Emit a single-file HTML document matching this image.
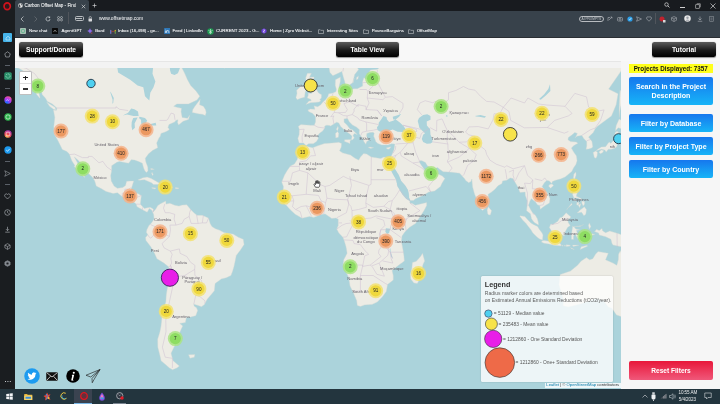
<!DOCTYPE html>
<html><head><meta charset="utf-8">
<style>
*{box-sizing:border-box}
html,body{margin:0;padding:0;width:720px;height:404px;overflow:hidden;background:#1a1d20;font-family:"Liberation Sans",sans-serif}
.a{position:absolute}
#side{left:0;top:0;width:15px;height:388.5px;background:#1a1d20}
#tabbar{left:15px;top:0;width:705px;height:11px;background:#181b1f}
#tab{left:15px;top:0;width:74px;height:11px;background:#38424b;border-radius:2px 2px 0 0}
#toolbar{left:15px;top:11px;width:705px;height:27px;background:#38424b}
.ct{color:#eef0f2;font-size:4.4px;white-space:nowrap;line-height:1;text-shadow:0 0 0.4px rgba(255,255,255,0.6)}
#page{left:15px;top:38px;width:705px;height:350.5px;background:#f6f6f6}
#header{left:15px;top:38px;width:705px;height:23px;background:#f8f8f8}
#band{left:15px;top:60.7px;width:606px;height:7.3px;background:#f3f3f3;border-top:0.8px solid #e6e6e6}
.btn{height:15px;top:42px;border-radius:2.5px;background:linear-gradient(#5c5c5c,#1a1a1a 55%,#000);color:#fff;font-weight:bold;font-size:6.7px;text-align:center;line-height:15px;box-shadow:0 0.5px 1px rgba(0,0,0,.4)}
#map{left:15px;top:68px;width:606px;height:320.5px;overflow:hidden}
.bb{left:629px;width:84px;border-radius:2px;background:linear-gradient(#1677ee,#17b4f7);color:#fff;font-weight:bold;font-size:7.05px;text-align:center}
#taskbar{left:0;top:388.5px;width:720px;height:15.5px;background:#23353e}
html{filter:grayscale(0)}
</style></head><body>
<div class="a" id="side"></div>
<div class="a" id="tabbar"></div>
<div class="a" id="tab"></div>
<div class="a" id="toolbar"></div>


<!-- sidebar icons -->
<svg class="a" style="left:3.2px;top:2.2px" width="8.4" height="8.4" viewBox="0 0 16 16"><ellipse cx="8" cy="8" rx="6" ry="6.4" fill="none" stroke="#d0121c" stroke-width="3.2"/><ellipse cx="8" cy="8" rx="1.9" ry="3.6" fill="none" stroke="#7a0a10" stroke-width="0.8"/></svg>
<div class="a" style="left:3px;top:33px;width:9px;height:9px;background:#46b4ea;border-radius:1px"></div>
<svg class="a" style="left:4.5px;top:34.5px" width="6" height="6" viewBox="0 0 12 12"><path d="M2 6L6 2.5L10 6V10H2Z" fill="none" stroke="#e8f6fd" stroke-width="1.1"/></svg>
<svg class="a" style="left:4px;top:50.5px" width="7" height="7" viewBox="0 0 14 14"><path d="M7 1.5L12.5 5.5L10.5 12H3.5L1.5 5.5Z" fill="none" stroke="#b9bdc2" stroke-width="1.2"/></svg>
<div class="a" style="left:5px;top:65px;width:5px;height:0.8px;background:#5a6068"></div>
<svg class="a" style="left:3.5px;top:72px" width="8" height="8" viewBox="0 0 16 16"><rect x="0.5" y="0.5" width="15" height="15" rx="3" fill="#2a8f6a"/><circle cx="8" cy="8" r="4.2" fill="none" stroke="#9fe0c2" stroke-width="1.5" stroke-dasharray="3 1.5"/></svg>
<div class="a" style="left:5px;top:88.3px;width:5px;height:0.8px;background:#5a6068"></div>
<svg class="a" style="left:3.5px;top:95.7px" width="8" height="8" viewBox="0 0 16 16"><defs><radialGradient id="mg" cx="0.3" cy="0.9" r="1"><stop offset="0" stop-color="#0a7cff"/><stop offset="0.5" stop-color="#a033ff"/><stop offset="1" stop-color="#ff5c87"/></radialGradient></defs><circle cx="8" cy="8" r="7.3" fill="url(#mg)"/><path d="M3.5 10L6.5 6.5L8.5 8.3L12 6L9 9.6L7 7.8Z" fill="#fff"/></svg>
<svg class="a" style="left:3.5px;top:113px" width="8" height="8" viewBox="0 0 16 16"><circle cx="8" cy="8" r="7.3" fill="#2bb34a"/><circle cx="8" cy="8" r="4.3" fill="none" stroke="#e5f7e8" stroke-width="1.3"/></svg>
<svg class="a" style="left:3.5px;top:129.6px" width="8" height="8" viewBox="0 0 16 16"><defs><radialGradient id="ig" cx="0.3" cy="1" r="1.1"><stop offset="0" stop-color="#fdd35b"/><stop offset="0.45" stop-color="#f04f4f"/><stop offset="1" stop-color="#a435c8"/></radialGradient></defs><circle cx="8" cy="8" r="7.3" fill="url(#ig)"/><rect x="4.5" y="4.5" width="7" height="7" rx="2" fill="none" stroke="#fff" stroke-width="1.1"/></svg>
<svg class="a" style="left:3.5px;top:146.3px" width="8" height="8" viewBox="0 0 16 16"><circle cx="8" cy="8" r="7.3" fill="#1d9bf0"/><path d="M4.6 8.3L7 10.5L11.4 5.8" fill="none" stroke="#fff" stroke-width="1.5"/></svg>
<div class="a" style="left:5px;top:161.2px;width:5px;height:0.8px;background:#5a6068"></div>
<svg class="a" style="left:4px;top:169.7px" width="7" height="7" viewBox="0 0 14 14"><path d="M1.5 1.5L12.5 7L1.5 12.5L4 7Z" fill="none" stroke="#a9aeb4" stroke-width="1.1" stroke-linejoin="round"/></svg>
<div class="a" style="left:5px;top:184px;width:5px;height:0.8px;background:#5a6068"></div>
<svg class="a" style="left:4px;top:192.5px" width="7" height="7" viewBox="0 0 14 14"><path d="M7 12L2 7A2.9 2.9 0 0 1 7 3A2.9 2.9 0 0 1 12 7Z" fill="none" stroke="#b9bdc2" stroke-width="1.2"/></svg>
<svg class="a" style="left:4px;top:209.2px" width="7" height="7" viewBox="0 0 14 14"><circle cx="7" cy="7" r="5.6" fill="none" stroke="#b9bdc2" stroke-width="1.2"/><path d="M7 3.8V7L9.3 9" fill="none" stroke="#b9bdc2" stroke-width="1.1"/></svg>
<svg class="a" style="left:4px;top:226px" width="7" height="7" viewBox="0 0 14 14"><path d="M7 1.5V9M4 6.3L7 9.3L10 6.3M2.5 12.3H11.5" fill="none" stroke="#b9bdc2" stroke-width="1.2"/></svg>
<svg class="a" style="left:4px;top:242.5px" width="7" height="7" viewBox="0 0 14 14"><path d="M7 1.3L12.2 4.2V9.8L7 12.7L1.8 9.8V4.2Z M1.8 4.2L7 7.1L12.2 4.2M7 7.1V12.7" fill="none" stroke="#b9bdc2" stroke-width="1.1"/></svg>
<svg class="a" style="left:4px;top:259.8px" width="7" height="7" viewBox="0 0 14 14"><path d="M7 1.3L12.2 4.2V9.8L7 12.7L1.8 9.8V4.2Z" fill="#7c8087" stroke="#a9aeb4" stroke-width="1"/><circle cx="7" cy="7" r="2.2" fill="#1b1d21"/></svg>
<div class="a" style="left:4.5px;top:380.5px;width:1px;height:1px;background:#c8ccd0;box-shadow:2.4px 0 #c8ccd0,4.8px 0 #c8ccd0"></div>

<!-- tab -->
<svg class="a" style="left:17.5px;top:3.3px" width="5" height="5" viewBox="0 0 10 10"><circle cx="5" cy="5" r="4.6" fill="#e8e8e8"/><path d="M2.2 3.2 Q4 2 4.6 4 Q3.6 5.6 5 6.6 Q4.4 8.6 3.6 9 Q1.5 7.5 1.2 5.2Z M6 1 Q8.8 2.5 9.2 5 Q8 5.6 7.2 4.6 Q6.2 3.2 6 1Z" fill="#3a3f46"/></svg>
<div class="a ct" style="left:24.6px;top:4.1px;font-size:4.6px;color:#e6e8ea">Carbon Offset Map - Find</div>
<div class="a" style="left:74px;top:1px;width:5px;height:10px;background:linear-gradient(90deg,rgba(56,66,75,0),#38424b)"></div>
<svg class="a" style="left:80.5px;top:3.5px" width="5" height="5" viewBox="0 0 10 10"><path d="M1.5 1.5L8.5 8.5M8.5 1.5L1.5 8.5" stroke="#d8dadc" stroke-width="1.3"/></svg>
<svg class="a" style="left:91.5px;top:3px" width="5" height="5" viewBox="0 0 10 10"><path d="M5 1V9M1 5H9" stroke="#d8dadc" stroke-width="1.3"/></svg>
<!-- window controls -->
<svg class="a" style="left:664px;top:2.2px" width="6" height="6" viewBox="0 0 12 12"><circle cx="5" cy="5" r="3.5" fill="none" stroke="#dcdcdc" stroke-width="1.4"/><path d="M7.5 7.5L11 11" stroke="#dcdcdc" stroke-width="1.6"/></svg>
<div class="a" style="left:679.5px;top:7px;width:5px;height:0.8px;background:#d0d0d0"></div>
<svg class="a" style="left:695px;top:2.5px" width="6" height="6" viewBox="0 0 12 12"><rect x="1.5" y="3.5" width="7" height="7" fill="none" stroke="#d0d0d0" stroke-width="1.2"/><path d="M3.5 1.5H10.5V8.5" fill="none" stroke="#d0d0d0" stroke-width="1.2"/></svg>
<svg class="a" style="left:709.5px;top:2.5px" width="6" height="6" viewBox="0 0 12 12"><path d="M1 1L11 11M11 1L1 11" stroke="#e0e0e0" stroke-width="1.3"/></svg>
<!-- address row -->
<svg class="a" style="left:20px;top:15.5px" width="5" height="6" viewBox="0 0 10 12"><path d="M7 1L2 6L7 11" fill="none" stroke="#cfd2d5" stroke-width="1.4"/></svg>
<svg class="a" style="left:33px;top:15.5px" width="5" height="6" viewBox="0 0 10 12"><path d="M3 1L8 6L3 11" fill="none" stroke="#6c7178" stroke-width="1.4"/></svg>
<svg class="a" style="left:44.5px;top:15.7px" width="6" height="6" viewBox="0 0 12 12"><path d="M10 6A4 4 0 1 1 8.5 2.8" fill="none" stroke="#cfd2d5" stroke-width="1.4"/><path d="M7 0.8L10.6 1.6L9.6 5Z" fill="#cfd2d5"/></svg>
<svg class="a" style="left:57px;top:16px" width="6" height="5.5" viewBox="0 0 12 11"><circle cx="3" cy="3" r="2" fill="none" stroke="#cfd2d5" stroke-width="1.1"/><circle cx="9" cy="3" r="2" fill="none" stroke="#cfd2d5" stroke-width="1.1"/><circle cx="3" cy="8" r="2" fill="none" stroke="#cfd2d5" stroke-width="1.1"/><circle cx="9" cy="8" r="2" fill="none" stroke="#cfd2d5" stroke-width="1.1"/></svg>
<div class="a" style="left:68px;top:12px;width:0.7px;height:12px;background:#50555c"></div>
<div class="a" style="left:74.6px;top:15.6px;width:9.4px;height:5.9px;border:0.8px solid #b8bcc0;border-radius:1.5px"></div>
<div class="a" style="left:76.3px;top:18.2px;width:6px;height:0.8px;background:#b8bcc0"></div>
<svg class="a" style="left:87.5px;top:15.5px" width="4.5" height="6" viewBox="0 0 9 12"><path d="M2.2 5V3.4A2.3 2.3 0 0 1 6.8 3.4V5" fill="none" stroke="#d8dadd" stroke-width="1.2"/><rect x="1" y="5" width="7" height="6" rx="0.8" fill="#d8dadd"/></svg>
<div class="a ct" style="left:99px;top:17.3px;font-size:4.95px;color:#cdd0d4">www.offsetmap.com</div>
<!-- right icons -->
<div class="a" style="left:578.7px;top:15.6px;width:25.3px;height:6.3px;border:0.8px solid #b8bcc0;border-radius:3.2px;color:#c8ccd0;font-size:3.2px;line-height:4.9px;text-align:center">AI PROMPTS</div>
<svg class="a" style="left:607px;top:16px" width="6" height="6" viewBox="0 0 12 12"><path d="M2 10V3H6M4 8L10 2M7 2H10V5" fill="none" stroke="#b8bcc0" stroke-width="1.1"/></svg>
<svg class="a" style="left:616.5px;top:16px" width="6" height="6" viewBox="0 0 12 12"><rect x="1" y="3" width="10" height="7" rx="1.5" fill="none" stroke="#b8bcc0" stroke-width="1.1"/><circle cx="6" cy="6.5" r="2" fill="none" stroke="#b8bcc0" stroke-width="1.1"/></svg>
<svg class="a" style="left:626.5px;top:15.6px" width="6" height="6" viewBox="0 0 12 12"><circle cx="6" cy="6" r="5.2" fill="#2b9ee8"/><path d="M3.5 6.3L5.4 8L8.6 4" fill="none" stroke="#fff" stroke-width="1.3"/></svg>
<svg class="a" style="left:636px;top:16px" width="6" height="6" viewBox="0 0 12 12"><path d="M1 1.5L11 6L1 10.5L3 6Z" fill="none" stroke="#b8bcc0" stroke-width="1.1"/></svg>
<svg class="a" style="left:645.5px;top:16px" width="6" height="6" viewBox="0 0 12 12"><path d="M6 10.5L1.6 6A2.6 2.6 0 0 1 6 2.6A2.6 2.6 0 0 1 10.4 6Z" fill="none" stroke="#b8bcc0" stroke-width="1.1"/></svg>
<div class="a" style="left:655px;top:13px;width:0.7px;height:11px;background:#50555c"></div>
<svg class="a" style="left:658.5px;top:15.5px" width="7" height="7" viewBox="0 0 14 14"><circle cx="6" cy="6" r="5" fill="#c0232e"/><rect x="8" y="8" width="5" height="5" fill="#d8d8d8"/></svg>
<svg class="a" style="left:671px;top:16px" width="6" height="6" viewBox="0 0 12 12"><path d="M6 1L11 3.5V8.5L6 11L1 8.5V3.5Z M1 3.5L6 6L11 3.5M6 6V11" fill="none" stroke="#b8bcc0" stroke-width="1"/></svg>
<svg class="a" style="left:684px;top:15px" width="7" height="7" viewBox="0 0 14 14"><circle cx="7" cy="7" r="6.5" fill="#e8e8e8"/><circle cx="7" cy="5.5" r="2.4" fill="#9aa0a8"/><path d="M2.8 11.5Q7 6.5 11.2 11.5" fill="#9aa0a8"/></svg>
<svg class="a" style="left:697px;top:16px" width="6" height="6" viewBox="0 0 12 12"><path d="M6 1V8M3 5L6 8L9 5M1.5 10.5H10.5" fill="none" stroke="#b8bcc0" stroke-width="1.1"/></svg>
<svg class="a" style="left:709px;top:15.8px" width="5" height="6" viewBox="0 0 10 12"><rect x="1.5" y="1" width="7" height="10" fill="none" stroke="#9aa0a6" stroke-width="1"/><path d="M3 4H7M3 6H7M3 8H7" stroke="#9aa0a6" stroke-width="0.8"/></svg>
<!-- bookmarks -->
<svg class="a" style="left:20.3px;top:28px" width="6" height="6" viewBox="0 0 12 12"><rect x="0" y="0" width="12" height="12" rx="1.5" fill="#a9bfb4"/><circle cx="6" cy="6" r="3.6" fill="none" stroke="#3fae7a" stroke-width="1.2"/></svg>
<div class="a ct" style="left:29px;top:29.2px">New chat</div>
<svg class="a" style="left:52px;top:28px" width="6" height="6" viewBox="0 0 12 12"><rect width="12" height="12" rx="1" fill="#0a0a0a"/><path d="M3 8L6 4L9 8" fill="none" stroke="#ddd" stroke-width="1"/></svg>
<div class="a ct" style="left:61.5px;top:29.2px">AgentGPT</div>
<svg class="a" style="left:86.5px;top:28px" width="6" height="6" viewBox="0 0 12 12"><path d="M6 0.5Q6.8 5.2 11.5 6Q6.8 6.8 6 11.5Q5.2 6.8 0.5 6Q5.2 5.2 6 0.5Z" fill="#8d6be8"/><circle cx="9.5" cy="10" r="1.2" fill="#e5484d"/></svg>
<div class="a ct" style="left:95.2px;top:29.2px">Bard</div>
<svg class="a" style="left:109.5px;top:28.5px" width="6" height="5" viewBox="0 0 12 10"><path d="M0.5 1.5V9.5H2.5V4L6 6.5L9.5 4V9.5H11.5V1.5L6 5.5Z" fill="#e24236"/><path d="M0.5 1.5L2.5 3V9.5H0.5Z" fill="#4285f4"/><path d="M11.5 1.5L9.5 3V9.5H11.5Z" fill="#34a853"/><path d="M9.5 3L11.5 1.5V3.5L9.5 5Z" fill="#fbbc04"/></svg>
<div class="a ct" style="left:118px;top:29.2px">Inbox (16,498) - ge...</div>
<svg class="a" style="left:163.7px;top:28px" width="6.3" height="6" viewBox="0 0 12 12"><rect width="12" height="12" rx="1" fill="#2f78b8"/><path d="M2.5 5V10M2.5 2.8V3.4M5 10V5M5 7Q5 5 7.2 5Q9.5 5 9.5 7.5V10" stroke="#fff" stroke-width="1.3" fill="none"/></svg>
<div class="a ct" style="left:172.5px;top:29.2px">Feed | LinkedIn</div>
<svg class="a" style="left:206.5px;top:28px" width="7" height="7" viewBox="0 0 14 14"><circle cx="7" cy="7" r="6.5" fill="#1f9a52"/><path d="M7 2V12M3 5L7 7L11 5M4 10L7 8L10 10" stroke="#e8f4ea" stroke-width="1.2" fill="none"/></svg>
<div class="a ct" style="left:216px;top:29.2px">CURRENT 2023 - G...</div>
<svg class="a" style="left:261px;top:28px" width="6" height="6" viewBox="0 0 12 12"><path d="M6 0.5L11 3.3V8.7L6 11.5L1 8.7V3.3Z" fill="#6b3fd8"/><path d="M4 4H8L4 8H8" stroke="#fff" stroke-width="1" fill="none"/></svg>
<div class="a ct" style="left:270px;top:29.2px">Home | Zyro Websit...</div>
<svg class="a" style="left:317.5px;top:28.8px" width="6" height="5" viewBox="0 0 12 10"><path d="M1 1.5H4.5L5.5 2.7H11V9H1Z" fill="none" stroke="#c8ccd0" stroke-width="1.1"/></svg>
<div class="a ct" style="left:326.7px;top:29.2px">Interesting Sites</div>
<svg class="a" style="left:363px;top:28.8px" width="6" height="5" viewBox="0 0 12 10"><path d="M1 1.5H4.5L5.5 2.7H11V9H1Z" fill="none" stroke="#c8ccd0" stroke-width="1.1"/></svg>
<div class="a ct" style="left:371.7px;top:29.2px">PounceBargains</div>
<svg class="a" style="left:408px;top:28.8px" width="6" height="5" viewBox="0 0 12 10"><path d="M1 1.5H4.5L5.5 2.7H11V9H1Z" fill="none" stroke="#c8ccd0" stroke-width="1.1"/></svg>
<div class="a ct" style="left:416.7px;top:29.2px">OffsetMap</div>
<div class="a" style="left:15px;top:37px;width:705px;height:1px;background:#2a2e33"></div>

<div class="a" id="page"></div>
<div class="a" id="header"></div>
<div class="a" id="band"></div>

<!-- header buttons -->
<div class="a btn" style="left:19px;width:64px">Support/Donate</div>
<div class="a btn" style="left:336px;width:63px">Table View</div>
<div class="a btn" style="left:652px;width:64px">Tutorial</div>

<!-- right panel -->
<div class="a" style="left:628.5px;top:63.5px;width:84.5px;height:9.5px;background:#ffff1a;color:#111;font-weight:bold;font-size:6.3px;line-height:9.5px;text-align:center">Projects Displayed: 7357</div>
<div class="a bb" style="top:77px;height:27.5px;line-height:9.8px;padding-top:4.5px">Search in the Project<br>Description</div>
<div class="a bb" style="top:114px;height:17.5px;line-height:19.2px">Filter by Database</div>
<div class="a bb" style="top:137px;height:17.5px;line-height:19.2px">Filter by Project Type</div>
<div class="a bb" style="top:160.3px;height:17.5px;line-height:19.2px">Filter by Country</div>
<div class="a" style="left:629px;top:361px;width:84px;height:19px;border-radius:2px;background:linear-gradient(#e8173a,#f0587a);color:#fff;font-weight:bold;font-size:6.6px;line-height:19px;text-align:center">Reset Filters</div>

<div class="a" id="map">
<svg width="606" height="321" viewBox="15 68 606 321" style="position:absolute;left:0;top:0;font-family:'Liberation Sans',sans-serif">
<rect x="15" y="68" width="606" height="321" fill="#abd3db"/>
<path d="M358.5 75.9L358.1 78.5L356.6 80.0L356.4 77.7ZM354.3 78.3L353.2 82.7L352.6 82.7L353.9 79.3ZM-42.8 3.5L190.7 3.5L181.1 63.2L181.1 66.2L184.9 73.7L187.5 79.7L190.7 85.4L196.0 90.9L199.8 96.2L197.0 100.0L188.5 104.0L176.9 104.0L173.7 106.3L176.9 107.3L181.5 108.3L181.1 111.8L182.2 117.4L187.5 118.3L189.8 114.9L188.5 119.5L183.2 121.3L178.6 124.9L177.5 122.5L177.9 119.8L175.8 120.4L174.8 121.9L169.0 124.6L168.0 127.5L169.4 129.2L168.2 130.6L165.2 132.0L161.0 133.4L160.3 136.2L159.0 137.9L156.9 142.4L156.7 143.2L157.8 147.7L152.9 150.3L148.6 153.8L145.3 158.3L145.9 162.0L147.8 166.9L148.0 170.9L146.3 172.5L144.8 170.7L143.6 168.1L142.3 163.2L138.0 161.3L134.4 160.1L131.2 159.8L128.7 163.2L125.9 162.8L119.6 161.5L116.8 162.3L111.7 165.7L111.7 170.4L110.7 175.6L111.3 180.9L114.1 186.1L117.4 188.3L122.8 187.4L125.5 185.4L126.6 181.3L130.2 180.9L133.8 180.9L131.7 187.6L130.8 189.9L130.0 193.9L131.9 193.6L137.8 193.4L141.4 195.4L140.6 201.9L140.4 204.3L144.4 208.4L147.2 207.8L150.3 207.3L153.7 209.3L152.7 212.3L151.6 209.9L149.3 208.6L147.2 212.3L142.9 209.9L137.0 206.7L136.1 204.1L132.3 200.9L131.2 199.3L122.1 196.5L117.4 192.8L113.2 193.6L106.0 191.4L101.5 188.8L96.2 186.1L94.7 180.9L92.2 177.0L86.3 171.6L82.9 166.1L78.6 160.8L74.4 157.1L77.1 162.0L80.3 168.1L83.5 173.9L84.8 177.7L79.9 172.8L73.9 166.1L75.0 165.7L71.8 160.8L69.3 154.1L66.9 151.6L62.3 149.5L58.0 140.8L54.0 133.7L53.8 126.3L54.8 117.4L53.4 109.9L56.5 110.2L56.8 108.0L52.3 104.0L47.4 101.4L45.3 98.0L42.1 94.5L41.3 89.8L40.0 88.4L35.7 87.3L32.6 82.7L29.4 78.5L27.3 74.9L23.0 70.8L18.8 68.3L13.5 67.0L8.2 66.2L-0.3 69.6L-10.9 79.7L-42.8 3.5ZM35.5 90.2L38.5 90.9L40.0 97.3L39.8 98.3L36.6 94.5ZM192.2 112.4L192.8 109.6L194.9 106.3L200.2 99.3L199.6 104.7L203.4 106.3L205.5 109.6L206.2 112.4L205.3 115.6L202.3 114.3L199.4 114.0ZM55.9 110.2L55.1 107.3L46.6 102.0L49.5 106.3L53.4 109.3ZM137.8 179.9L142.9 177.7L147.2 177.0L151.4 178.6L155.7 180.9L160.5 183.8L157.8 184.5L153.5 184.5L151.4 182.7L147.2 180.9L144.4 179.7L139.7 180.2ZM163.5 184.9L166.3 184.5L169.7 184.9L172.8 187.6L168.4 188.3L164.1 188.1L160.1 188.5L163.5 187.2ZM151.8 187.6L156.1 187.9L155.0 189.0L151.8 188.3ZM175.4 187.6L178.8 187.9L178.4 188.8L175.4 188.8ZM165.8 201.1L160.5 203.7L157.8 205.4L156.1 208.4L154.6 210.6L152.7 212.3L153.7 214.8L154.0 219.3L150.8 223.8L148.9 225.5L146.9 229.5L146.3 232.3L147.8 234.8L145.5 237.6L145.9 240.4L150.8 246.8L154.4 253.3L156.9 258.7L163.9 263.1L168.8 267.1L168.4 278.9L167.5 287.1L166.3 294.4L165.8 301.9L162.4 312.2L161.6 320.4L161.0 326.0L159.9 331.8L157.6 339.3L157.8 347.2L159.9 355.5L161.0 360.7L165.2 364.3L169.4 367.9L172.6 369.8L176.9 367.9L179.4 366.1L173.1 360.7L172.4 358.3L171.1 353.2L174.8 345.6L175.0 340.9L174.5 337.8L178.8 334.8L181.3 328.9L182.8 326.0L179.8 323.4L185.4 322.6L186.4 317.6L190.7 317.1L195.8 315.7L197.7 310.4L196.6 307.8L194.1 305.9L193.8 304.2L198.7 305.7L201.5 306.7L204.5 304.4L207.2 299.3L211.3 294.4L214.4 290.7L215.1 283.6L221.4 278.9L226.3 277.8L231.0 275.5L232.7 270.9L234.0 266.4L235.2 260.9L236.3 255.4L240.5 250.0L244.1 244.6L243.3 239.3L238.4 237.2L233.1 234.0L228.9 233.5L224.0 232.5L219.3 230.1L215.5 228.7L211.9 226.5L210.2 223.4L208.5 218.0L202.3 215.3L197.0 215.3L194.3 213.1L190.7 209.5L186.8 204.8L182.2 205.0L179.0 206.1L174.8 205.2L169.9 203.2L166.0 204.1ZM188.5 354.8L194.9 354.5L194.3 357.2L190.0 358.3ZM305.5 146.1L312.7 147.7L316.9 146.1L324.4 143.5L331.8 143.0L338.8 142.2L341.6 143.5L341.3 146.9L339.6 150.8L342.4 152.8L346.0 153.8L350.5 154.9L355.1 158.3L358.7 160.1L360.4 157.1L363.6 153.6L366.8 154.1L371.3 156.9L376.4 157.8L380.6 158.6L383.8 157.1L386.5 157.8L390.6 157.6L392.1 162.0L391.0 165.7L390.2 168.1L393.6 175.1L396.3 179.7L397.6 186.5L400.8 191.0L402.3 194.3L406.1 198.7L409.9 200.9L409.9 203.0L412.4 203.5L415.2 205.2L426.7 202.4L426.7 205.4L424.1 210.6L419.9 217.0L415.6 223.4L409.3 227.6L405.0 231.8L402.0 236.1L401.4 241.4L402.9 248.9L403.9 255.4L404.4 260.9L398.6 265.3L392.1 270.5L393.3 275.5L393.3 280.1L387.6 284.5L386.3 291.5L382.3 296.9L377.4 301.9L372.1 304.4L364.7 304.9L360.4 306.5L357.3 305.4L356.6 300.6L353.0 292.0L350.0 286.0L348.6 277.5L343.0 265.3L343.7 259.8L347.1 253.3L346.0 246.8L344.1 240.4L342.8 237.2L338.8 232.9L336.7 229.1L338.2 225.5L338.2 219.3L336.0 218.0L331.8 218.5L325.2 214.0L320.8 214.4L317.6 215.9L313.8 217.4L309.5 216.5L302.1 218.3L295.1 214.2L290.0 209.5L286.2 205.2L282.3 201.9L280.9 196.1L283.0 192.1L283.4 186.5L281.7 182.0L284.5 175.1L287.2 170.4L290.4 165.9L294.4 164.0L297.2 159.6L298.3 155.1L301.9 151.8ZM422.6 253.3L420.5 256.5L416.3 261.3L412.4 262.4L411.8 268.7L410.3 274.3L410.7 278.9L413.9 282.9L417.3 283.6L419.2 280.1L420.9 273.2L423.1 264.2L424.7 260.9ZM306.1 145.6L303.4 143.0L299.1 143.0L297.8 138.4L299.1 134.8L299.3 129.5L298.3 126.3L301.0 124.6L306.3 124.9L310.6 125.2L314.2 125.2L315.5 121.9L315.5 116.8L312.7 113.4L308.9 111.8L307.8 109.9L310.6 108.9L314.8 109.3L314.0 105.7L317.6 106.7L320.8 104.7L323.3 101.4L325.4 100.0L327.8 96.6L328.6 93.8L332.9 93.1L336.0 91.6L336.3 89.1L335.2 85.4L335.4 79.7L340.5 76.9L340.3 81.6L339.4 85.4L339.0 88.0L341.1 89.8L343.5 90.9L346.6 89.1L348.3 91.3L353.7 88.7L357.3 88.7L362.6 86.1L362.6 81.6L363.8 77.7L367.9 79.7L367.9 74.5L370.4 70.0L377.4 69.2L380.6 66.6L375.3 65.3L365.8 66.2L363.6 60.9L363.6 54.1L371.1 41.9L381.7 16.6L445.3 3.5L530.2 -3.5L615.1 3.5L636.3 44.4L621.5 70.4L608.7 89.1L618.1 93.8L616.2 104.7L611.5 115.9L597.9 126.0L595.4 128.4L593.3 132.6L588.6 137.0L592.0 141.6L592.8 146.7L591.8 148.0L588.6 149.0L586.0 149.3L586.7 145.9L586.7 141.6L583.7 138.4L581.8 135.4L576.9 136.2L575.2 137.9L577.3 133.4L574.8 132.6L571.8 135.1L568.4 137.6L568.0 139.8L570.5 141.6L576.1 141.9L578.0 143.2L573.9 145.6L571.4 148.0L573.7 152.1L576.5 155.9L576.7 157.8L577.1 160.8L575.9 164.5L573.5 168.1L571.8 171.6L568.8 173.9L565.2 177.0L560.4 179.0L555.7 180.2L552.5 181.5L551.7 183.6L549.3 180.9L546.8 180.6L544.4 182.7L542.1 186.5L545.3 191.0L547.8 193.2L550.0 198.7L549.5 203.0L545.3 205.4L540.2 209.3L539.8 205.4L537.6 205.0L535.5 201.9L531.3 198.7L530.0 200.9L528.5 205.2L530.6 209.5L532.8 212.9L535.1 214.8L537.4 218.7L538.3 222.3L538.7 224.8L537.6 224.4L534.0 222.3L531.5 218.7L530.4 213.8L526.6 210.8L527.0 206.3L527.3 200.9L525.3 195.4L525.1 192.1L520.0 192.5L518.1 187.6L515.2 182.5L512.8 178.6L510.1 177.9L506.9 180.2L502.6 180.9L502.0 183.6L498.0 185.8L494.8 189.4L491.0 192.5L488.2 194.3L488.4 199.6L487.4 205.6L485.7 208.0L482.5 210.4L480.4 208.4L478.9 203.7L476.5 198.7L474.6 194.3L472.5 186.7L472.1 182.0L471.9 179.0L471.0 181.5L468.7 182.7L465.7 180.6L464.6 178.8L463.4 177.4L460.8 174.4L459.6 173.2L451.7 172.3L448.7 172.1L443.2 171.8L439.6 169.2L437.5 167.6L433.7 169.0L427.5 166.1L425.4 162.5L422.0 160.8L419.9 160.8L419.4 162.3L422.6 166.9L424.5 169.7L425.8 171.6L426.9 170.2L427.3 173.7L431.5 174.6L435.4 172.1L437.7 169.7L438.1 173.9L442.4 176.0L444.9 178.6L442.1 183.1L440.5 186.5L434.7 191.0L428.8 192.1L423.1 195.4L415.6 198.7L413.5 200.4L410.3 200.6L409.0 198.0L408.6 193.9L407.8 189.9L405.0 185.4L401.0 180.9L398.6 175.1L395.7 170.4L392.7 165.7L392.3 162.0L390.6 157.6L392.3 153.8L394.0 149.5L394.8 144.0L391.4 143.8L388.0 145.1L381.7 145.1L377.8 143.5L375.7 141.6L374.9 138.9L373.6 136.2L374.2 133.4L373.2 132.3L370.0 132.6L366.8 133.4L366.6 136.2L368.9 140.3L366.8 141.6L365.8 144.3L363.8 141.6L363.0 138.9L360.9 136.2L359.2 133.4L359.4 129.8L356.6 127.2L352.4 124.9L349.0 121.6L348.1 119.5L347.3 118.6L344.1 118.9L344.1 122.2L346.6 124.6L350.3 129.2L352.2 129.5L356.0 133.2L357.3 134.6L354.5 133.4L353.0 135.4L354.3 137.9L352.0 140.3L351.3 139.5L352.0 136.2L349.8 134.0L347.7 132.6L345.6 131.2L343.9 129.5L340.5 126.3L338.8 123.1L336.7 122.2L333.9 124.0L330.7 126.0L329.2 125.5L326.9 125.2L324.8 126.0L324.8 128.1L322.7 130.9L319.3 133.4L317.4 136.2L318.4 138.4L316.5 141.4L313.3 143.8L308.7 143.8ZM341.8 71.6L332.9 75.7L329.9 72.5L328.6 65.3L328.6 58.7L341.3 44.4L360.4 16.6L364.7 41.9L359.4 51.8L355.1 58.7L355.8 65.3L358.7 69.6L354.7 74.5L352.8 82.7L348.1 85.8L345.4 85.8L344.7 81.6L343.3 76.9ZM305.9 104.4L310.6 102.7L314.8 102.4L319.1 102.0L321.0 100.7L319.7 99.7L321.4 98.0L321.6 94.8L318.4 92.7L316.3 89.1L313.8 84.3L312.5 82.4L314.2 76.9L309.5 77.3L311.4 73.3L307.4 73.3L305.7 77.7L306.1 81.6L306.1 86.1L307.6 88.0L311.0 87.6L311.6 90.9L311.4 93.4L308.2 93.1L308.2 95.2L307.2 98.0L310.6 99.3L311.2 100.7L308.9 101.0ZM297.2 99.7L295.9 97.6L297.0 93.4L296.6 90.2L300.6 86.5L304.8 86.5L306.3 89.1L305.1 93.1L304.6 97.3L300.6 98.3ZM344.5 139.8L351.1 139.5L350.0 141.6L350.0 143.8L348.1 142.7L344.5 141.4ZM337.5 131.5L338.8 133.4L338.4 137.3L335.8 137.9L335.4 133.4ZM337.9 126.3L338.4 128.1L337.5 130.9L336.3 129.2ZM368.1 147.4L370.0 146.9L373.8 147.7L370.6 148.5ZM386.5 147.7L391.2 146.7L389.1 149.3L386.8 149.0ZM618.1 131.5L618.7 133.4L618.3 139.5L617.2 143.0L617.0 146.4L614.9 148.2L611.3 149.3L608.3 149.3L606.2 152.1L604.7 150.0L601.3 149.3L596.0 150.8L596.9 149.8L601.3 146.9L605.6 146.7L608.1 143.2L609.4 141.9L610.7 143.5L613.8 140.3L615.1 136.2L614.9 133.2L616.0 131.5ZM595.8 151.0L593.0 152.6L593.5 154.1L594.3 157.6L596.0 158.3L597.1 155.9L597.5 152.3ZM601.3 150.0L603.7 150.5L602.8 152.6L600.3 153.8L598.8 152.1ZM615.3 130.9L616.2 125.5L619.1 118.9L626.1 123.4L624.7 126.3L621.9 129.2L618.3 127.8ZM619.4 117.4L619.8 111.2L621.9 101.4L620.8 90.9L620.0 89.8L619.4 101.4L619.1 111.2ZM575.9 172.1L576.1 175.1L574.4 179.7L573.3 178.1L573.9 173.9ZM552.1 184.0L553.6 185.4L550.6 188.3L548.5 186.1L550.0 184.3ZM488.2 206.7L491.6 210.6L490.5 214.8L488.8 215.1L487.6 213.8L487.1 210.1ZM574.8 187.4L577.5 188.1L577.5 192.1L576.3 196.3L581.6 198.7L581.4 200.6L578.0 198.0L573.9 198.0L572.5 194.3L573.3 192.1ZM584.3 206.7L586.5 209.5L585.8 214.2L583.9 215.7L581.6 212.3L577.1 212.9L580.1 210.1L582.2 208.4ZM566.1 212.7L564.4 214.8L562.1 217.2L559.9 217.8L557.8 221.2L552.9 224.4L550.8 224.0L549.3 227.6L551.4 230.8L552.1 234.0L555.3 235.0L561.2 234.6L564.2 236.1L565.2 231.8L567.6 227.6L570.3 225.5L568.4 222.7L567.8 220.0L569.5 218.5L571.0 217.0L568.4 214.8ZM520.2 215.7L524.9 216.5L527.5 219.5L530.9 222.9L533.4 224.4L537.6 226.5L539.6 229.7L542.1 232.9L543.0 235.0L542.5 240.1L540.0 239.3L537.2 237.2L532.8 232.9L530.9 229.7L528.3 226.5L526.0 223.4L522.8 220.2L519.8 216.3ZM542.7 240.4L544.7 240.6L547.8 241.0L552.3 242.3L557.0 242.1L558.9 242.7L561.0 244.2L561.0 245.9L553.6 245.3L548.9 244.0L544.0 243.3L541.3 242.1ZM583.5 224.6L580.5 226.3L573.1 226.8L572.7 225.9L572.2 229.3L571.4 235.0L571.4 239.3L573.5 239.5L573.5 236.5L574.8 233.5L576.9 237.2L578.2 239.1L579.5 236.1L577.3 233.1L576.5 230.4L579.7 229.7L575.9 229.1L574.4 227.4L575.9 226.3L581.2 225.7ZM596.6 229.3L599.2 230.6L602.0 228.4L602.6 230.8L605.6 232.7L609.8 231.0L616.6 233.1L622.5 235.0L627.4 238.2L631.0 241.4L631.7 244.6L637.4 249.6L628.9 246.8L623.6 244.8L621.9 246.8L613.0 245.1L611.9 243.3L610.9 239.3L605.6 236.7L599.2 235.0L598.6 233.1L594.5 231.6ZM620.4 250.4L623.2 258.7L627.8 266.4L629.5 269.4L635.3 275.5L640.6 281.3L643.8 289.5L640.6 301.9L636.3 313.6L628.7 316.3L622.5 317.1L616.4 314.9L611.9 308.3L608.3 307.0L603.4 300.6L596.0 298.6L580.7 303.9L568.2 307.0L563.1 305.7L563.5 299.3L558.9 284.8L560.1 274.6L570.5 270.9L577.5 265.3L581.2 260.9L586.5 257.6L589.6 259.8L592.8 258.7L595.6 254.1L598.1 251.5L608.3 253.3L605.6 259.8L613.0 263.1L616.8 265.3L618.3 259.8L618.5 254.3ZM224.8 68.3L216.1 63.2L207.6 49.4L201.3 16.6L264.9 16.6L231.0 58.7ZM684.5 305.7L690.5 312.2L691.5 324.6L675.6 339.3L683.0 323.2ZM150.8 168.3L154.4 169.2L150.8 169.7ZM152.0 172.3L153.3 174.6L152.5 175.6L151.6 173.5ZM581.8 200.9L584.6 201.5L584.6 204.1L583.1 206.1L581.8 203.0ZM576.9 202.2L579.2 202.4L578.4 205.2L576.7 205.0ZM580.9 203.7L579.7 207.8L578.2 205.2L580.1 204.1ZM571.6 203.2L566.7 209.7L567.4 208.4L572.2 204.5ZM573.3 198.7L575.9 199.3L575.4 201.3L573.9 200.2ZM561.2 244.8L562.5 246.3L563.3 245.7ZM564.2 245.1L565.0 246.6L565.7 245.5ZM566.1 244.8L566.3 246.6L570.5 245.9L569.5 245.1ZM572.5 245.1L573.1 246.6L579.0 245.3L575.9 245.1ZM581.2 246.8L580.1 249.6L587.5 246.3L587.1 245.3ZM570.5 247.6L574.4 249.4L571.4 248.7ZM589.4 222.9L590.9 226.5L589.4 229.3L588.4 225.3ZM589.6 233.5L595.0 234.2L590.1 235.9ZM583.3 231.2L586.5 231.8L585.4 231.0Z" fill="#edece5" stroke="#c9d6d4" stroke-width="0.4" stroke-linejoin="round"/>
<path d="M152.5 49.4L153.1 67.5L152.5 73.7L155.4 81.6L153.5 87.3L150.3 92.7L149.3 100.4L145.0 96.2L143.3 87.3L137.6 85.4L130.2 79.7L118.1 72.5L117.0 65.3L120.6 58.7L131.2 49.4ZM169.4 64.0L170.1 70.4L171.1 73.7L174.5 74.9L177.9 73.3L179.4 69.6L180.9 64.9ZM379.8 131.5L377.4 130.1L377.0 127.2L378.7 124.9L378.7 122.8L381.0 119.8L383.4 115.9L386.5 117.1L387.0 119.5L389.1 121.9L393.1 120.7L395.5 119.5L397.2 120.4L400.1 122.8L403.5 126.0L406.3 130.3L403.1 132.0L397.6 131.8L392.7 129.5L387.0 131.5L382.7 132.0ZM393.3 119.5L392.7 116.8L397.6 115.2L401.2 113.7L399.1 116.8L395.7 119.5ZM427.3 114.3L430.5 115.9L430.5 119.8L426.7 121.6L426.9 125.5L430.1 129.2L430.3 132.0L430.5 134.8L432.4 138.7L432.4 142.2L430.5 143.5L426.9 143.8L423.1 141.9L421.8 138.9L423.1 134.8L425.0 133.2L422.0 130.6L419.4 127.8L418.4 123.4L417.7 121.0L419.0 118.0L423.1 114.9ZM387.1 160.8L389.3 166.1L389.9 167.6L392.3 172.8L396.3 179.7L397.4 185.4L400.3 191.0L402.5 194.3L406.5 198.7L409.9 200.6L410.3 200.4L409.0 198.0L408.6 193.9L407.8 189.9L405.0 185.4L401.0 180.9L398.6 175.1L395.7 170.4L392.7 165.7L392.3 162.0L391.0 165.7L390.8 165.9L388.5 164.2L387.4 161.1ZM122.8 115.6L128.1 112.8L131.2 108.6L134.4 109.3L138.0 111.5L138.7 115.9L133.4 115.9L127.0 114.6ZM137.6 117.4L133.2 118.0L131.7 121.9L131.5 126.3L132.3 130.3L134.9 127.8L134.6 123.4L136.6 119.5ZM139.7 116.8L145.0 118.0L147.2 120.4L144.6 125.2L143.1 126.3L141.2 123.4L141.0 119.8L138.9 118.0ZM150.3 126.6L149.3 127.8L144.4 130.6L141.0 130.1L142.9 128.6L147.2 127.2ZM148.6 125.5L149.7 124.3L155.7 122.8L156.3 125.5ZM112.4 103.7L112.6 99.7L110.0 91.6L111.1 92.7L113.8 98.0L113.2 103.0ZM385.9 228.2L390.2 228.7L389.1 232.9L387.0 234.0L385.3 231.8ZM550.0 84.3L550.4 90.9L546.1 95.2L540.8 99.7L539.1 99.0L544.0 94.5L548.3 89.1ZM475.0 115.9L480.4 114.9L486.1 116.5L484.6 117.7L479.3 116.8L476.1 116.5ZM446.4 114.9L447.9 115.9L447.0 116.8L445.8 116.2ZM380.0 235.0L380.8 238.2L383.8 245.7L382.9 245.1L379.8 238.2ZM390.2 247.9L391.2 253.3L392.7 258.5L391.0 256.5L389.9 248.9Z" fill="#abd3db"/>
<path d="M56.5 108.0L116.0 108.0L116.0 106.7L119.6 109.3L128.1 110.5M159.5 120.4L166.3 120.4L167.7 119.5L169.4 116.2L171.1 113.1L174.1 114.0L175.0 119.8M18.8 66.2L26.2 68.3L34.7 73.7L42.1 83.5L40.8 88.4M69.5 154.6L74.6 154.1L82.4 157.6L88.4 157.6L88.4 156.4L92.0 156.4L99.0 162.8L102.8 161.3L104.7 164.0L106.8 166.9L111.7 170.4M122.3 196.5L122.3 193.2L124.9 193.0L124.9 189.2L128.9 189.2L130.6 187.6M130.0 193.9L128.5 196.7L126.8 198.2M128.5 196.7L131.7 197.8L132.7 199.8M141.4 195.4L136.6 197.6L132.7 199.8M136.1 204.1L140.4 204.3M142.1 209.9L142.7 207.3M152.7 212.3L153.7 209.3M164.8 203.9L163.5 208.2L165.2 212.7L169.4 212.7L174.8 214.4L174.1 219.1L176.0 225.1L182.2 223.4L184.3 219.1L189.2 216.5L189.6 212.7L190.7 209.5M189.2 216.5L191.1 223.4L198.1 223.4L196.6 214.8M198.1 223.4L202.3 222.9L203.4 215.3M202.3 222.9L206.6 222.9L208.5 218.0M150.6 224.6L153.5 225.9L158.4 228.0L161.8 232.5L169.4 236.5L170.5 229.7L169.9 225.1L176.0 225.1M147.8 234.8L149.3 237.2L150.8 238.2L155.7 232.9L158.4 228.0M169.4 236.5L162.0 243.6L164.1 247.9L170.3 251.1L172.2 254.3L170.9 258.7L171.6 263.1L170.5 265.3L168.8 267.1M170.3 251.1L179.4 248.9L180.1 253.3L186.8 256.5L190.7 262.4L194.9 265.3L194.7 269.4L184.7 275.5L174.1 276.9L170.5 265.3M170.5 265.3L174.8 277.1L172.6 287.1L169.4 301.9L167.3 312.2L165.8 320.4L166.0 331.8L162.4 347.2L165.2 357.2L172.4 358.3L172.4 367.9M184.7 275.5L195.5 283.1L193.6 287.9L199.8 287.9L202.1 283.6L201.3 280.1L194.9 275.5L194.7 269.4M202.1 283.6L203.8 287.6L195.8 294.9L193.8 304.2M195.8 294.9L200.2 296.9L205.1 300.9L204.7 303.6M313.3 148.0L315.5 155.6L310.6 155.9L306.3 160.8L299.5 162.0L299.5 166.4L290.0 166.4M299.5 167.3L299.5 170.4L292.5 172.8L290.4 181.3L282.1 181.3M299.5 170.4L307.8 172.8L320.5 184.7L325.0 186.5L329.7 185.4L343.3 176.3L348.1 178.6L368.9 185.4L371.1 184.3L371.1 179.7L371.3 156.9M307.8 172.8L306.3 192.1L306.3 194.3L292.1 195.8L283.4 191.9M292.1 195.8L293.8 200.9L288.9 201.1L282.3 200.6M288.9 201.1L287.2 204.1L286.2 205.2M293.8 200.9L292.5 206.7L295.7 209.5L300.2 211.6L302.1 218.3M295.7 209.5L301.0 206.5L306.3 205.8L311.6 207.3L312.1 204.1L318.0 204.1L320.8 203.9L321.2 200.9L318.4 195.4L306.3 194.3M306.3 205.8L311.6 216.5M318.0 204.1L320.5 215.1M320.8 203.9L321.6 214.4M321.2 200.9L325.6 202.6L326.9 198.2L334.6 199.3L347.7 199.8L348.8 204.1L346.4 212.7M325.6 202.6L323.7 214.0M346.4 212.7L336.7 217.8M320.1 198.7M325.0 186.5L326.5 195.4L326.9 198.2M349.8 176.3L351.5 185.4L347.7 199.8L348.8 204.1L350.9 206.3L352.0 210.6L358.3 209.5L366.4 207.3L365.8 203.0L366.8 194.3L368.9 185.4M371.1 179.7L384.9 179.7L396.3 179.7M365.8 203.0L373.2 207.3L383.8 206.3L388.5 201.5L392.3 200.6L395.5 196.5L399.7 189.9M383.8 206.3L390.2 209.5L394.0 217.8L390.2 218.7L376.1 215.9L371.1 218.0L365.8 218.5L358.3 217.0L352.4 222.9L349.8 220.2M352.0 210.6L352.0 211.6L352.2 217.8L352.4 222.9L346.0 223.6L342.0 225.3L336.7 229.1M342.0 222.9L338.8 222.9M392.3 200.6L390.2 209.5L394.4 213.8L394.0 217.8L401.8 220.2L406.7 218.7L419.9 210.6L409.9 203.0M399.7 189.9L405.0 196.5L409.9 200.9M394.0 217.8L392.3 222.9L390.8 225.5L390.2 229.7L380.8 229.7L379.5 238.2L383.4 244.6L390.2 252.2L392.7 258.7M406.7 218.7L405.0 223.4L406.3 231.2M390.2 229.7L401.2 237.6M380.8 229.7L384.9 225.5L383.6 220.2L376.4 217.8M380.8 229.7L379.5 234.0L380.4 236.1L380.4 240.4L382.9 245.1M342.8 237.2L346.6 236.9L348.8 232.3L355.1 220.2L358.3 217.0M344.1 239.9L353.0 240.4L354.1 243.6L360.4 244.6L365.1 250.9L368.7 254.3L364.7 255.9L362.6 266.4L370.2 265.1M343.0 265.3L347.1 264.9L362.6 265.1L362.6 266.4L360.4 275.5L360.4 291.0L353.0 291.0M382.9 245.1L389.1 248.9L387.8 255.4L379.1 263.1L371.5 266.0L370.2 265.1L381.0 256.5L378.5 253.3L378.9 250.0L382.9 245.1M390.2 252.2L403.9 252.2M379.1 263.1L384.4 276.2L376.8 274.3L372.1 266.4M360.4 275.5L373.2 275.5L385.5 283.6L387.6 284.5M390.2 252.2L391.2 258.7L392.9 263.1L382.5 260.9M386.5 157.8L392.1 162.0M314.2 125.2L318.0 127.2L324.8 128.1M304.2 129.2L299.3 129.5M304.2 129.2L302.1 136.2L302.3 142.4M323.3 101.4L328.4 106.3L331.6 106.3L335.4 108.3L334.1 112.4L330.7 116.8L333.9 115.9L332.9 118.0L333.9 124.0M331.6 106.3L330.7 99.0L333.1 93.4M334.1 112.4L338.4 112.8L345.6 112.4L347.3 109.6L343.9 103.7L349.4 101.7L350.0 101.4L348.1 95.2L348.3 91.3M338.4 112.8L343.5 115.6L347.1 115.9L346.9 118.9M347.1 115.9L352.2 114.6L354.1 111.2L354.1 109.3L353.9 109.3L357.9 104.7L366.0 106.3L366.0 109.6L377.4 110.2L381.7 115.9M349.4 101.7L353.0 103.7L358.3 106.3L357.9 104.7M352.2 114.6L358.1 118.0L359.2 119.8L365.8 121.9L366.6 123.7L366.6 131.2L362.1 132.3L360.9 135.4M365.8 121.9L378.7 124.6M366.6 131.2L373.8 130.1L377.4 129.2M381.7 115.9L377.4 110.2M359.6 89.5L366.4 89.5L367.9 91.3L367.2 98.0L369.1 103.0L366.0 109.6M367.9 91.3L374.5 84.6L377.8 82.7L376.4 77.7L377.4 70.0M362.6 82.7L371.5 82.0L377.8 82.7M369.6 77.7L376.1 75.7M377.8 82.7L385.3 97.3L382.9 99.7L367.2 98.0M385.3 97.3L392.3 96.6L403.1 103.4L402.9 108.0L399.1 114.0M376.4 64.5L381.7 58.7L380.6 39.3M342.8 71.6L344.5 63.2L343.5 51.8L348.8 41.9L354.1 28.4M406.3 130.3L410.3 131.8L416.7 131.5L416.5 129.5L402.9 125.2L413.5 127.5L421.1 129.5M410.3 131.8L413.1 136.5L419.9 138.4L421.4 133.4M413.1 136.5L413.1 142.7L407.8 143.2L395.7 144.0M413.1 142.7L415.6 152.1L419.9 162.0M407.8 143.2L400.3 152.3L396.1 155.1L390.6 157.6M400.3 152.3L401.2 155.9L412.9 163.0L419.4 162.0M396.1 155.1L392.3 162.0M393.1 153.1L395.5 149.0L395.7 145.9M412.9 163.0L422.0 168.1L427.3 173.9M427.5 174.4L435.1 178.3L428.4 186.5L430.7 191.9M435.1 178.3L437.3 174.6L437.3 170.4M408.8 191.0L426.2 186.5L430.7 191.9M421.8 114.9L417.3 109.6L419.9 103.0L425.2 100.7L432.6 102.7L437.9 100.7L444.3 102.7L448.5 99.7L448.5 92.7L455.9 90.5L463.4 86.5L468.7 89.1L475.0 90.2L480.4 96.2L486.7 101.4L494.1 102.0L503.3 107.3M421.4 133.4L430.5 127.8L436.6 131.2L436.8 120.4L442.1 118.9L445.3 126.3L447.5 130.9L453.6 136.2L459.1 142.2L466.3 141.9L469.3 139.5L476.1 143.0L474.6 136.2L468.7 134.8L465.5 132.0L469.1 126.9L478.4 126.6L488.2 128.9L492.9 120.1L494.1 113.7L499.4 114.3L503.3 107.3M447.5 130.9L447.0 141.6L447.9 144.0L432.6 141.9L432.4 142.2M447.9 144.0L447.9 147.2L448.9 158.3L447.2 161.1L452.1 168.1L448.7 172.3M459.1 142.2L469.1 148.2L466.6 151.0L459.1 157.1L447.2 162.3M476.1 143.0L483.1 148.2L485.4 150.0L486.7 154.6L489.9 160.1L496.3 164.2L505.0 167.3L506.5 165.7L513.2 168.8L524.5 165.7L519.0 172.8L515.8 179.7L514.5 181.5M469.1 148.2L476.3 154.6L474.0 160.6L467.6 165.4L464.0 174.4L462.7 175.8M505.2 169.2L506.2 174.2L506.9 179.3M508.8 172.1L513.5 170.0L513.0 175.1L513.9 177.9L513.9 181.5M524.5 165.7L527.5 175.3L532.8 179.9L530.4 183.6L524.5 183.1L527.5 193.2L527.0 206.3M534.7 178.8L542.1 180.6L544.7 177.9L546.8 180.6M532.8 179.9L532.3 188.8L540.4 189.0L541.9 196.7L536.6 196.3L535.5 201.9M540.4 189.0L545.7 192.5L546.1 196.1L543.2 204.8L539.8 205.4M541.9 196.7L546.1 196.1M532.6 213.6L534.5 214.4M503.3 107.3L511.1 98.0L524.5 103.0L527.9 98.0L538.7 104.0L546.8 105.0L565.0 106.3L572.0 113.4L568.4 115.9L554.6 120.4L547.2 127.5L524.3 127.8L510.7 120.4L509.0 111.5L503.3 107.3M565.0 106.3L574.8 93.4L586.5 96.9L588.6 107.0L595.8 111.5L604.1 109.9L600.5 120.4L595.2 128.1M595.2 128.1L590.3 129.8L581.8 135.4M590.7 139.5L586.5 140.8M547.2 127.5L564.2 133.2L568.4 131.5M551.4 224.8L554.0 224.0L557.8 223.4L563.1 219.5L567.4 218.3M617.0 233.1L617.2 247.0" fill="none" stroke="#cdbfd0" stroke-width="0.5" stroke-linejoin="round"/>
<text x="106.7" y="145.5" font-size="4.1" fill="#67636c" text-anchor="middle">United States</text>
<text x="100" y="178.5" font-size="4.1" fill="#67636c" text-anchor="middle">México</text>
<text x="309.5" y="87" font-size="4.1" fill="#67636c" text-anchor="middle">United Kingdom</text>
<text x="345" y="102.3" font-size="4.1" fill="#67636c" text-anchor="middle">Deutschland</text>
<text x="322" y="116.5" font-size="4.1" fill="#67636c" text-anchor="middle">France</text>
<text x="311.5" y="137" font-size="4.1" fill="#67636c" text-anchor="middle">España</text>
<text x="348" y="132" font-size="4.1" fill="#67636c" text-anchor="middle">Italia</text>
<text x="377.7" y="94" font-size="4.1" fill="#67636c" text-anchor="middle">Беларусь</text>
<text x="390.5" y="112.3" font-size="4.1" fill="#67636c" text-anchor="middle">Україна</text>
<text x="369.8" y="119.2" font-size="4.1" fill="#67636c" text-anchor="middle">România</text>
<text x="365" y="139.5" font-size="4.1" fill="#67636c" text-anchor="middle">Ελλάς</text>
<text x="394" y="139.5" font-size="4.1" fill="#67636c" text-anchor="middle">Türkiye</text>
<text x="459" y="113.5" font-size="4.1" fill="#67636c" text-anchor="middle">Қазақстан</text>
<text x="453" y="132.8" font-size="4.1" fill="#67636c" text-anchor="middle">O'zbekiston</text>
<text x="443.7" y="139.5" font-size="4.1" fill="#67636c" text-anchor="middle">Turkmenistan</text>
<text x="293.6" y="184.5" font-size="4.1" fill="#67636c" text-anchor="middle">lmgrb</text>
<text x="311" y="165" font-size="4.1" fill="#67636c" text-anchor="middle">ozayr / aljzair</text>
<text x="311" y="170" font-size="4.1" fill="#67636c" text-anchor="middle">aljzair</text>
<text x="354.9" y="171.3" font-size="4.1" fill="#67636c" text-anchor="middle">libya</text>
<text x="380.3" y="171.3" font-size="4.1" fill="#67636c" text-anchor="middle">msr</text>
<text x="411.8" y="176.3" font-size="4.1" fill="#67636c" text-anchor="middle">alsaudia</text>
<text x="317" y="191.7" font-size="4.1" fill="#67636c" text-anchor="middle">Mali</text>
<text x="339.4" y="191.7" font-size="4.1" fill="#67636c" text-anchor="middle">Niger</text>
<text x="334.4" y="210.5" font-size="4.1" fill="#67636c" text-anchor="middle">Nigeria</text>
<text x="356" y="196.8" font-size="4.1" fill="#67636c" text-anchor="middle">Tchad tshad</text>
<text x="380.8" y="196.8" font-size="4.1" fill="#67636c" text-anchor="middle">alsudan</text>
<text x="419.2" y="196.1" font-size="4.1" fill="#67636c" text-anchor="middle">alyemn</text>
<text x="379.6" y="212.1" font-size="4.1" fill="#67636c" text-anchor="middle">South Sudan</text>
<text x="401.9" y="210.2" font-size="4.1" fill="#67636c" text-anchor="middle">itiopia</text>
<text x="419.2" y="217.3" font-size="4.1" fill="#67636c" text-anchor="middle">Soomaaliya /</text>
<text x="419.2" y="222.3" font-size="4.1" fill="#67636c" text-anchor="middle">alsomal</text>
<text x="398.2" y="230.2" font-size="4.1" fill="#67636c" text-anchor="middle">Kenya</text>
<text x="366" y="233.2" font-size="4.1" fill="#67636c" text-anchor="middle">République</text>
<text x="366" y="238.6" font-size="4.1" fill="#67636c" text-anchor="middle">démocratique</text>
<text x="366" y="243.1" font-size="4.1" fill="#67636c" text-anchor="middle">du Congo</text>
<text x="357.5" y="255.1" font-size="4.1" fill="#67636c" text-anchor="middle">Angola</text>
<text x="403" y="242.6" font-size="4.1" fill="#67636c" text-anchor="middle">Tanzania</text>
<text x="409" y="155.3" font-size="4.1" fill="#67636c" text-anchor="middle">aliraq</text>
<text x="435.7" y="156.8" font-size="4.1" fill="#67636c" text-anchor="middle">iran</text>
<text x="457" y="153.1" font-size="4.1" fill="#67636c" text-anchor="middle">afghanstan</text>
<text x="470" y="162.3" font-size="4.1" fill="#67636c" text-anchor="middle">pakstan</text>
<text x="529" y="148" font-size="4.1" fill="#67636c" text-anchor="middle">zhg</text>
<text x="521" y="189.1" font-size="4.1" fill="#67636c" text-anchor="middle">thai</text>
<text x="549" y="195.6" font-size="4.1" fill="#67636c" text-anchor="middle">Việt Nam</text>
<text x="579" y="201" font-size="4.1" fill="#67636c" text-anchor="middle">Philippines</text>
<text x="570" y="221.2" font-size="4.1" fill="#67636c" text-anchor="middle">Malaysia</text>
<text x="572.4" y="235.1" font-size="4.1" fill="#67636c" text-anchor="middle">Indonesia</text>
<text x="543" y="115.5" font-size="4.1" fill="#67636c" text-anchor="middle">Монгол</text>
<text x="543" y="120.9" font-size="4.1" fill="#67636c" text-anchor="middle">улс</text>
<text x="612.4" y="148" font-size="4.1" fill="#67636c" text-anchor="middle">nih</text>
<text x="162.7" y="221" font-size="4.1" fill="#67636c" text-anchor="middle">Colombia</text>
<text x="155" y="251.5" font-size="4.1" fill="#67636c" text-anchor="middle">Perú</text>
<text x="181" y="264.4" font-size="4.1" fill="#67636c" text-anchor="middle">Bolivia</text>
<text x="192.2" y="278.7" font-size="4.1" fill="#67636c" text-anchor="middle">Paraguay /</text>
<text x="192.2" y="283.2" font-size="4.1" fill="#67636c" text-anchor="middle">Paraguá</text>
<text x="181" y="318.3" font-size="4.1" fill="#67636c" text-anchor="middle">Argentina</text>
<text x="215.7" y="261.5" font-size="4.1" fill="#67636c" text-anchor="middle">Brasil</text>
<text x="354.7" y="280" font-size="4.1" fill="#67636c" text-anchor="middle">Namibia</text>
<text x="363.3" y="293.1" font-size="4.1" fill="#67636c" text-anchor="middle">South Africa</text>
<text x="391.8" y="270.1" font-size="4.1" fill="#67636c" text-anchor="middle">Moçambique</text>
<circle cx="37.8" cy="86" r="7.5" fill="rgba(170,228,130,0.85)"/><circle cx="37.8" cy="86" r="5.6" fill="#8edd62"/>
<text x="37.8" y="87.6" font-size="4.6" fill="#222" text-anchor="middle">8</text>
<circle cx="92.2" cy="116.1" r="7.5" fill="rgba(243,226,110,0.85)"/><circle cx="92.2" cy="116.1" r="5.6" fill="#efd83c"/>
<text x="92.2" y="117.69999999999999" font-size="4.6" fill="#222" text-anchor="middle">28</text>
<circle cx="112.5" cy="121.8" r="7.5" fill="rgba(243,226,110,0.85)"/><circle cx="112.5" cy="121.8" r="5.6" fill="#efd83c"/>
<text x="112.5" y="123.39999999999999" font-size="4.6" fill="#222" text-anchor="middle">10</text>
<circle cx="146.1" cy="129.7" r="7.5" fill="rgba(245,180,140,0.85)"/><circle cx="146.1" cy="129.7" r="5.6" fill="#eb9860"/>
<text x="146.1" y="131.29999999999998" font-size="4.6" fill="#222" text-anchor="middle">467</text>
<circle cx="61" cy="131" r="7.5" fill="rgba(245,180,140,0.85)"/><circle cx="61" cy="131" r="5.6" fill="#eb9860"/>
<text x="61" y="132.6" font-size="4.6" fill="#222" text-anchor="middle">177</text>
<circle cx="121.1" cy="153.2" r="7.5" fill="rgba(245,180,140,0.85)"/><circle cx="121.1" cy="153.2" r="5.6" fill="#eb9860"/>
<text x="121.1" y="154.79999999999998" font-size="4.6" fill="#222" text-anchor="middle">410</text>
<circle cx="82.8" cy="168.8" r="7.5" fill="rgba(170,228,130,0.85)"/><circle cx="82.8" cy="168.8" r="5.6" fill="#8edd62"/>
<text x="82.8" y="170.4" font-size="4.6" fill="#222" text-anchor="middle">2</text>
<circle cx="165.2" cy="187.1" r="7.5" fill="rgba(243,226,110,0.85)"/><circle cx="165.2" cy="187.1" r="5.6" fill="#efd83c"/>
<text x="165.2" y="188.7" font-size="4.6" fill="#222" text-anchor="middle">20</text>
<circle cx="130" cy="196" r="7.5" fill="rgba(245,180,140,0.85)"/><circle cx="130" cy="196" r="5.6" fill="#eb9860"/>
<text x="130" y="197.6" font-size="4.6" fill="#222" text-anchor="middle">137</text>
<circle cx="345.4" cy="91" r="7.5" fill="rgba(170,228,130,0.85)"/><circle cx="345.4" cy="91" r="5.6" fill="#8edd62"/>
<text x="345.4" y="92.6" font-size="4.6" fill="#222" text-anchor="middle">2</text>
<circle cx="333" cy="103.3" r="7.5" fill="rgba(243,226,110,0.85)"/><circle cx="333" cy="103.3" r="5.6" fill="#efd83c"/>
<text x="333" y="104.89999999999999" font-size="4.6" fill="#222" text-anchor="middle">50</text>
<circle cx="372.6" cy="78.6" r="7.5" fill="rgba(170,228,130,0.85)"/><circle cx="372.6" cy="78.6" r="5.6" fill="#8edd62"/>
<text x="372.6" y="80.19999999999999" font-size="4.6" fill="#222" text-anchor="middle">6</text>
<circle cx="302.6" cy="152.3" r="7.5" fill="rgba(243,226,110,0.85)"/><circle cx="302.6" cy="152.3" r="5.6" fill="#efd83c"/>
<text x="302.6" y="153.9" font-size="4.6" fill="#222" text-anchor="middle">13</text>
<circle cx="441.1" cy="106.5" r="7.5" fill="rgba(170,228,130,0.85)"/><circle cx="441.1" cy="106.5" r="5.6" fill="#8edd62"/>
<text x="441.1" y="108.1" font-size="4.6" fill="#222" text-anchor="middle">2</text>
<circle cx="409" cy="135.5" r="7.5" fill="rgba(243,226,110,0.85)"/><circle cx="409" cy="135.5" r="5.6" fill="#efd83c"/>
<text x="409" y="137.1" font-size="4.6" fill="#222" text-anchor="middle">37</text>
<circle cx="386.2" cy="136.7" r="7.5" fill="rgba(245,180,140,0.85)"/><circle cx="386.2" cy="136.7" r="5.6" fill="#eb9860"/>
<text x="386.2" y="138.29999999999998" font-size="4.6" fill="#222" text-anchor="middle">119</text>
<circle cx="474.8" cy="143" r="7.5" fill="rgba(243,226,110,0.85)"/><circle cx="474.8" cy="143" r="5.6" fill="#efd83c"/>
<text x="474.8" y="144.6" font-size="4.6" fill="#222" text-anchor="middle">17</text>
<circle cx="501" cy="119.4" r="7.5" fill="rgba(243,226,110,0.85)"/><circle cx="501" cy="119.4" r="5.6" fill="#efd83c"/>
<text x="501" y="121.0" font-size="4.6" fill="#222" text-anchor="middle">22</text>
<circle cx="541.9" cy="113.2" r="7.5" fill="rgba(243,226,110,0.85)"/><circle cx="541.9" cy="113.2" r="5.6" fill="#efd83c"/>
<text x="541.9" y="114.8" font-size="4.6" fill="#222" text-anchor="middle">22</text>
<circle cx="592.1" cy="114.5" r="7.5" fill="rgba(243,226,110,0.85)"/><circle cx="592.1" cy="114.5" r="5.6" fill="#efd83c"/>
<text x="592.1" y="116.1" font-size="4.6" fill="#222" text-anchor="middle">59</text>
<circle cx="538.7" cy="155.3" r="7.5" fill="rgba(245,180,140,0.85)"/><circle cx="538.7" cy="155.3" r="5.6" fill="#eb9860"/>
<text x="538.7" y="156.9" font-size="4.6" fill="#222" text-anchor="middle">266</text>
<circle cx="561.2" cy="154.6" r="7.5" fill="rgba(245,180,140,0.85)"/><circle cx="561.2" cy="154.6" r="5.6" fill="#eb9860"/>
<text x="561.2" y="156.2" font-size="4.6" fill="#222" text-anchor="middle">773</text>
<circle cx="160" cy="231.8" r="7.5" fill="rgba(245,180,140,0.85)"/><circle cx="160" cy="231.8" r="5.6" fill="#eb9860"/>
<text x="160" y="233.4" font-size="4.6" fill="#222" text-anchor="middle">171</text>
<circle cx="190.4" cy="233.8" r="7.5" fill="rgba(243,226,110,0.85)"/><circle cx="190.4" cy="233.8" r="5.6" fill="#efd83c"/>
<text x="190.4" y="235.4" font-size="4.6" fill="#222" text-anchor="middle">15</text>
<circle cx="226.8" cy="240.4" r="7.5" fill="rgba(243,226,110,0.85)"/><circle cx="226.8" cy="240.4" r="5.6" fill="#efd83c"/>
<text x="226.8" y="242.0" font-size="4.6" fill="#222" text-anchor="middle">50</text>
<circle cx="208.3" cy="262.4" r="7.5" fill="rgba(243,226,110,0.85)"/><circle cx="208.3" cy="262.4" r="5.6" fill="#efd83c"/>
<text x="208.3" y="264.0" font-size="4.6" fill="#222" text-anchor="middle">55</text>
<circle cx="198.9" cy="288.9" r="7.5" fill="rgba(243,226,110,0.85)"/><circle cx="198.9" cy="288.9" r="5.6" fill="#efd83c"/>
<text x="198.9" y="290.5" font-size="4.6" fill="#222" text-anchor="middle">90</text>
<circle cx="166.2" cy="311.4" r="7.5" fill="rgba(243,226,110,0.85)"/><circle cx="166.2" cy="311.4" r="5.6" fill="#efd83c"/>
<text x="166.2" y="313.0" font-size="4.6" fill="#222" text-anchor="middle">20</text>
<circle cx="175.3" cy="338.6" r="7.5" fill="rgba(170,228,130,0.85)"/><circle cx="175.3" cy="338.6" r="5.6" fill="#8edd62"/>
<text x="175.3" y="340.20000000000005" font-size="4.6" fill="#222" text-anchor="middle">7</text>
<circle cx="284.2" cy="197.1" r="7.5" fill="rgba(243,226,110,0.85)"/><circle cx="284.2" cy="197.1" r="5.6" fill="#efd83c"/>
<text x="284.2" y="198.7" font-size="4.6" fill="#222" text-anchor="middle">21</text>
<circle cx="317.1" cy="208.3" r="7.5" fill="rgba(245,180,140,0.85)"/><circle cx="317.1" cy="208.3" r="5.6" fill="#eb9860"/>
<text x="317.1" y="209.9" font-size="4.6" fill="#222" text-anchor="middle">236</text>
<circle cx="358.5" cy="221.9" r="7.5" fill="rgba(243,226,110,0.85)"/><circle cx="358.5" cy="221.9" r="5.6" fill="#efd83c"/>
<text x="358.5" y="223.5" font-size="4.6" fill="#222" text-anchor="middle">38</text>
<circle cx="389.5" cy="163.6" r="7.5" fill="rgba(243,226,110,0.85)"/><circle cx="389.5" cy="163.6" r="5.6" fill="#efd83c"/>
<text x="389.5" y="165.2" font-size="4.6" fill="#222" text-anchor="middle">25</text>
<circle cx="431.1" cy="173.5" r="7.5" fill="rgba(170,228,130,0.85)"/><circle cx="431.1" cy="173.5" r="5.6" fill="#8edd62"/>
<text x="431.1" y="175.1" font-size="4.6" fill="#222" text-anchor="middle">6</text>
<circle cx="398.2" cy="221.8" r="7.5" fill="rgba(245,180,140,0.85)"/><circle cx="398.2" cy="221.8" r="5.6" fill="#eb9860"/>
<text x="398.2" y="223.4" font-size="4.6" fill="#222" text-anchor="middle">405</text>
<circle cx="385.8" cy="241.1" r="7.5" fill="rgba(245,180,140,0.85)"/><circle cx="385.8" cy="241.1" r="5.6" fill="#eb9860"/>
<text x="385.8" y="242.7" font-size="4.6" fill="#222" text-anchor="middle">390</text>
<circle cx="486.2" cy="176.3" r="7.5" fill="rgba(245,180,140,0.85)"/><circle cx="486.2" cy="176.3" r="5.6" fill="#eb9860"/>
<text x="486.2" y="177.9" font-size="4.6" fill="#222" text-anchor="middle">1172</text>
<circle cx="482.3" cy="201.5" r="7.5" fill="rgba(245,180,140,0.85)"/><circle cx="482.3" cy="201.5" r="5.6" fill="#eb9860"/>
<text x="482.3" y="203.1" font-size="4.6" fill="#222" text-anchor="middle">456</text>
<circle cx="539.7" cy="195" r="7.5" fill="rgba(245,180,140,0.85)"/><circle cx="539.7" cy="195" r="5.6" fill="#eb9860"/>
<text x="539.7" y="196.6" font-size="4.6" fill="#222" text-anchor="middle">355</text>
<circle cx="573.9" cy="186.1" r="7.5" fill="rgba(243,226,110,0.85)"/><circle cx="573.9" cy="186.1" r="5.6" fill="#efd83c"/>
<text x="573.9" y="187.7" font-size="4.6" fill="#222" text-anchor="middle">50</text>
<circle cx="555.1" cy="237.5" r="7.5" fill="rgba(243,226,110,0.85)"/><circle cx="555.1" cy="237.5" r="5.6" fill="#efd83c"/>
<text x="555.1" y="239.1" font-size="4.6" fill="#222" text-anchor="middle">25</text>
<circle cx="584.9" cy="236.6" r="7.5" fill="rgba(170,228,130,0.85)"/><circle cx="584.9" cy="236.6" r="5.6" fill="#8edd62"/>
<text x="584.9" y="238.2" font-size="4.6" fill="#222" text-anchor="middle">4</text>
<circle cx="350.2" cy="266.8" r="7.5" fill="rgba(170,228,130,0.85)"/><circle cx="350.2" cy="266.8" r="5.6" fill="#8edd62"/>
<text x="350.2" y="268.40000000000003" font-size="4.6" fill="#222" text-anchor="middle">2</text>
<circle cx="375.7" cy="290.8" r="7.5" fill="rgba(243,226,110,0.85)"/><circle cx="375.7" cy="290.8" r="5.6" fill="#efd83c"/>
<text x="375.7" y="292.40000000000003" font-size="4.6" fill="#222" text-anchor="middle">91</text>
<circle cx="418.5" cy="273.5" r="7.5" fill="rgba(243,226,110,0.85)"/><circle cx="418.5" cy="273.5" r="5.6" fill="#efd83c"/>
<text x="418.5" y="275.1" font-size="4.6" fill="#222" text-anchor="middle">16</text>
<circle cx="310.7" cy="85.5" r="6.5" fill="#f7e34a" stroke="#333" stroke-width="0.9"/>
<circle cx="510.2" cy="134.3" r="6.8" fill="#f7e34a" stroke="#333" stroke-width="0.9"/>
<circle cx="618.6" cy="138.7" r="5" fill="#4fd0f0" stroke="#234" stroke-width="0.9"/>
<circle cx="169.9" cy="277.7" r="8.6" fill="#e81ee8" stroke="#3a1f5a" stroke-width="0.9"/>
<circle cx="91" cy="83.5" r="4.2" fill="#4fd0f0" stroke="#234" stroke-width="0.9"/>
</svg>
</div>


<!-- zoom control -->
<div class="a" style="left:19.4px;top:71.4px;width:12.2px;height:23.3px;background:#fff;border:0.8px solid rgba(0,0,0,0.25);border-radius:1.5px"></div>
<div class="a" style="left:20px;top:83px;width:11px;height:0.5px;background:#ddd"></div>
<div class="a" style="left:23.2px;top:77.2px;width:4.6px;height:1.2px;background:#222"></div><div class="a" style="left:24.9px;top:75.5px;width:1.2px;height:4.6px;background:#222"></div>
<div class="a" style="left:23px;top:88.4px;width:5px;height:1.4px;background:#333"></div>
<!-- cursor -->
<svg class="a" style="left:312.6px;top:179.5px" width="8" height="8" viewBox="0 0 16 16"><path d="M5 14.5L2 9.5Q1.3 8.2 2.6 7.8Q3.5 7.6 4.3 8.6L5 9.5V3Q5 1.8 6.1 1.8Q7.2 1.8 7.2 3V7V2.2Q7.2 1 8.3 1Q9.4 1 9.4 2.2V7V3Q9.4 2 10.5 2Q11.5 2 11.5 3V7.5V4.6Q11.5 3.7 12.5 3.7Q13.6 3.7 13.6 4.6V10Q13.6 13 11.8 14.5Z" fill="#fff" stroke="#333" stroke-width="1.5" stroke-linejoin="round"/></svg>
<!-- legend -->
<div class="a" style="left:481px;top:276px;width:132.4px;height:105.5px;background:rgba(255,255,255,0.78);border-radius:1.5px;box-shadow:0 0 1.5px rgba(0,0,0,0.25)"></div>
<div class="a" style="left:484.8px;top:281.2px;font-size:7.2px;font-weight:bold;color:#333;line-height:1">Legend</div>
<div class="a" style="left:484.8px;top:289.8px;font-size:5.05px;color:#606060;line-height:7.1px;white-space:nowrap">Radius marker colors are determined based<br>on Estimated Annual Emissions Reductions (tCO2/year).</div>
<svg class="a" style="left:480px;top:300px" width="134" height="80" viewBox="480 300 134 80">
<circle cx="488.4" cy="313.6" r="3.7" fill="#4fd0f0" stroke="#335" stroke-width="0.6"/>
<circle cx="491.4" cy="324" r="6" fill="#f7e34a" stroke="#333" stroke-width="0.6"/>
<circle cx="493.2" cy="338.9" r="8.6" fill="#e81ee8" stroke="#333" stroke-width="0.6"/>
<circle cx="499.8" cy="362.6" r="14.8" fill="#ee6a48" stroke="#333" stroke-width="0.6"/>
</svg>
<div class="a" style="left:493.8px;top:311.2px;font-size:4.86px;color:#555;white-space:nowrap;line-height:5px">= 51129 - Median value</div>
<div class="a" style="left:498.5px;top:321.6px;font-size:4.86px;color:#555;white-space:nowrap;line-height:5px">= 235483 - Mean value</div>
<div class="a" style="left:503px;top:336.5px;font-size:4.86px;color:#555;white-space:nowrap;line-height:5px">= 1212860 - One Standard Deviation</div>
<div class="a" style="left:515.5px;top:359.6px;font-size:4.86px;color:#555;white-space:nowrap;line-height:5px">= 1212860 - One+ Standard Deviation</div>
<!-- attribution -->
<div class="a" style="left:545px;top:382.7px;width:76px;height:5.8px;background:rgba(255,255,255,0.8)"></div>
<div class="a" style="left:546.3px;top:383.4px;font-size:4.2px;color:#333;white-space:nowrap;line-height:4.5px"><span style="color:#0078a8">Leaflet</span> | &copy; <span style="color:#0078a8">OpenStreetMap</span> contributors</div>
<!-- social -->
<svg class="a" style="left:24px;top:368px" width="16" height="16" viewBox="0 0 32 32"><circle cx="16" cy="16" r="15.5" fill="#1d9bf0"/><path d="M25 10.5c-.7.3-1.4.5-2.1.6.8-.5 1.3-1.2 1.6-2-.7.4-1.5.7-2.3.9a3.7 3.7 0 0 0-6.3 3.4c-3.1-.2-5.8-1.6-7.6-3.9-1 1.7-.5 3.8 1.1 4.9-.6 0-1.2-.2-1.7-.5 0 1.8 1.3 3.3 3 3.7-.6.2-1.1.2-1.7.1.5 1.5 1.9 2.5 3.5 2.6A7.4 7.4 0 0 1 7 21.8 10.5 10.5 0 0 0 23.1 12.4c.8-.5 1.4-1.2 1.9-1.9z" fill="#fff"/></svg>
<svg class="a" style="left:46px;top:371.5px" width="12" height="9" viewBox="0 0 24 18"><rect x="0.5" y="0.5" width="23" height="17" fill="#111"/><path d="M1 1L12 10L23 1M1 17L9 8.5M23 17L15 8.5" fill="none" stroke="#e8e8e8" stroke-width="1.6"/></svg>
<svg class="a" style="left:66px;top:369px" width="14" height="14" viewBox="0 0 28 28"><circle cx="14" cy="14" r="13.5" fill="#000"/><circle cx="15.6" cy="7.4" r="2.1" fill="#fff"/><path d="M12.2 11.5H16.4L13.9 21Q13.6 22.2 14.6 21.8L15.6 21.4L15.3 22.6Q13.2 23.6 11.6 23.3Q10.2 22.9 10.7 21L12.6 13.4H11.6Z" fill="#fff"/></svg>
<svg class="a" style="left:85px;top:368px" width="16" height="16" viewBox="0 0 32 32"><path d="M30 3L2 14.5L11.5 18L30 3L14 21L14.5 29.5L18.5 22.3L30 3Z" fill="none" stroke="#222" stroke-width="1.3" stroke-linejoin="round"/></svg>

<div class="a" id="taskbar"></div>

<!-- taskbar icons -->
<svg class="a" style="left:5.5px;top:393px" width="7" height="7" viewBox="0 0 14 14"><path d="M0.5 2.2L6 1.4V6.6H0.5Z M7 1.2L13.5 0.3V6.6H7Z M0.5 7.4H6V12.6L0.5 11.8Z M7 7.4H13.5V13.7L7 12.8Z" fill="#f2f4f6"/></svg>
<svg class="a" style="left:24px;top:392.5px" width="8.5" height="7.5" viewBox="0 0 17 15"><path d="M0.5 2H6L7.5 3.5H16.5V14.5H0.5Z" fill="#e8b53a"/><rect x="0.5" y="5" width="16" height="9.5" fill="#f6d46a"/><rect x="3" y="7.5" width="11" height="4" fill="#3c8fd8"/></svg>
<svg class="a" style="left:42.5px;top:391.8px" width="8" height="9" viewBox="0 0 16 18"><path d="M8 1L11 6L15 4L12 10L15 16L9 13L4 17L5 11L1 8L6 6Z" fill="#e0463a"/><path d="M6 4L9 9L7 15" fill="none" stroke="#3d8ee8" stroke-width="2"/><circle cx="11" cy="12" r="2" fill="#f4c430"/></svg>
<svg class="a" style="left:60px;top:392px" width="8" height="8" viewBox="0 0 16 16"><path d="M11.5 2.5A6.5 6.5 0 1 0 13 12.5" fill="none" stroke="#f0c840" stroke-width="2"/><path d="M4 7A5 5 0 0 0 11 13" fill="none" stroke="#3fb6e8" stroke-width="1.6"/></svg>
<div class="a" style="left:74.3px;top:388.5px;width:17.6px;height:15.5px;background:#3a4350"></div>
<div class="a" style="left:74.3px;top:403px;width:17.6px;height:1px;background:#7ab8e8"></div>
<svg class="a" style="left:79.5px;top:392px" width="8" height="8" viewBox="0 0 16 16"><ellipse cx="8" cy="8" rx="6.5" ry="6.8" fill="none" stroke="#e0151f" stroke-width="2.6"/><ellipse cx="8" cy="8" rx="2.4" ry="4.6" fill="none" stroke="#b0101a" stroke-width="1.4"/></svg>
<svg class="a" style="left:98px;top:391.8px" width="8" height="9" viewBox="0 0 16 18"><path d="M8 1Q14 8 13.5 12A5.5 5.5 0 0 1 2.5 12Q2 8 8 1Z" fill="#7a4de0"/><path d="M8 4Q11.5 9 11 12A3.3 3.3 0 0 1 4.5 12Q4.5 9 8 4Z" fill="#f07cbc"/><path d="M4 12Q8 9 12 13Q8 16 4 12Z" fill="#35a0f0"/></svg>
<svg class="a" style="left:115.5px;top:392px" width="8.5" height="8.5" viewBox="0 0 17 17"><circle cx="7.5" cy="7.5" r="6.3" fill="#2d3540" stroke="#d0d4d8" stroke-width="1.3"/><path d="M5 5.5L7.5 7.5L10 5" stroke="#d0d4d8" stroke-width="1" fill="none"/><circle cx="12" cy="12" r="3.5" fill="#e01e2a"/></svg>
<div class="a" style="left:113px;top:403px;width:13px;height:1px;background:#7a8490"></div>
<svg class="a" style="left:641.5px;top:394px" width="6" height="4" viewBox="0 0 12 8"><path d="M1 7L6 2L11 7" fill="none" stroke="#d8dadd" stroke-width="1.2"/></svg>
<svg class="a" style="left:650.5px;top:391.5px" width="5" height="9" viewBox="0 0 10 18"><rect x="2.5" y="0.5" width="5" height="5" fill="#cfd3d7"/><path d="M1 5.5H9V12Q9 15 5 15Q1 15 1 12Z" fill="#eef0f2"/><rect x="4" y="15" width="2" height="3" fill="#cfd3d7"/></svg>
<svg class="a" style="left:659.5px;top:393px" width="7" height="6" viewBox="0 0 14 12"><path d="M1 11L13 1V11Z" fill="#50575f"/><path d="M7 11V6M9.5 11V4M12 11V2" stroke="#a8adb3" stroke-width="1"/></svg>
<svg class="a" style="left:668.5px;top:392.5px" width="7" height="7" viewBox="0 0 14 14"><path d="M1 5H4L8 1.5V12.5L4 9H1Z" fill="none" stroke="#d0d4d8" stroke-width="1.1"/><path d="M10 4.5Q11.5 7 10 9.5M11.8 3Q14 7 11.8 11" fill="none" stroke="#d0d4d8" stroke-width="0.9"/></svg>
<div class="a" style="left:678.5px;top:390.2px;font-size:4.6px;color:#e8eaec;white-space:nowrap;line-height:5px;letter-spacing:-0.1px">10:55 AM</div>
<div class="a" style="left:678.8px;top:397px;font-size:4.6px;color:#e8eaec;white-space:nowrap;line-height:5px;letter-spacing:-0.1px">5/4/2023</div>
<svg class="a" style="left:703.5px;top:392px" width="8" height="8" viewBox="0 0 16 16"><path d="M1.5 2H14.5V11H8L5 14V11H1.5Z" fill="none" stroke="#d8dadd" stroke-width="1.2"/></svg>

</body></html>
